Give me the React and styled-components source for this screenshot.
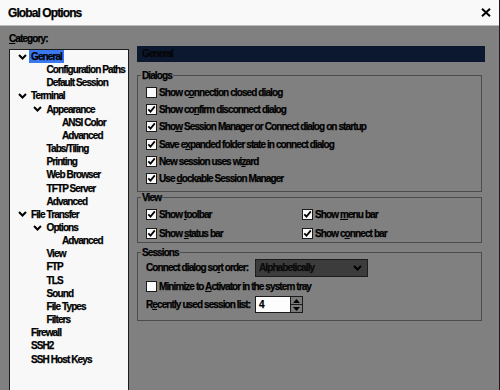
import React from 'react';
import styled, { createGlobalStyle } from 'styled-components';

const FONT = `"Liberation Sans", Arial, sans-serif`;

const GlobalStyle = createGlobalStyle`
	html, body {
		margin: 0;
		padding: 0;
		background: #808080;
	}
`;

const treeRows = [
	{ label: 'General', level: 0, open: true, selected: true },
	{ label: 'Configuration Paths', level: 1 },
	{ label: 'Default Session', level: 1 },
	{ label: 'Terminal', level: 0, open: true },
	{ label: 'Appearance', level: 1, open: true },
	{ label: 'ANSI Color', level: 2 },
	{ label: 'Advanced', level: 2 },
	{ label: 'Tabs/Tiling', level: 1 },
	{ label: 'Printing', level: 1 },
	{ label: 'Web Browser', level: 1 },
	{ label: 'TFTP Server', level: 1 },
	{ label: 'Advanced', level: 1 },
	{ label: 'File Transfer', level: 0, open: true },
	{ label: 'Options', level: 1, open: true },
	{ label: 'Advanced', level: 2 },
	{ label: 'View', level: 1 },
	{ label: 'FTP', level: 1 },
	{ label: 'TLS', level: 1 },
	{ label: 'Sound', level: 1 },
	{ label: 'File Types', level: 1 },
	{ label: 'Filters', level: 1 },
	{ label: 'Firewall', level: 0 },
	{ label: 'SSH2', level: 0 },
	{ label: 'SSH Host Keys', level: 0 },
];

function Chevron() {
	return (
		<svg width="9" height="6" viewBox="0 0 9 6">
			<path d="M1 1 L4.5 4.5 L8 1" fill="none" stroke="#000" strokeWidth="2" />
		</svg>
	);
}

function Check({ checked, children }) {
	return (
		<CheckRow>
			<Box>
				{checked && (
					<svg width="9" height="9" viewBox="0 0 9 9">
						<path d="M1.3 4.3 L3.5 6.6 L7.8 1.4" fill="none" stroke="#000" strokeWidth="1.7" />
					</svg>
				)}
			</Box>
			<Label>{children}</Label>
		</CheckRow>
	);
}

function App() {
	return (
		<>
			<GlobalStyle />
			<Window>
				<TitleBar>
					<Title>Global Options</Title>
					<svg width="10" height="9" viewBox="0 0 10 9">
						<path d="M1 0.8 L9 8.2 M9 0.8 L1 8.2" stroke="#000" strokeWidth="2" />
					</svg>
				</TitleBar>
				<Body>
					<LeftCol>
						<CategoryLabel>
							<u>C</u>ategory:
						</CategoryLabel>
						<Tree>
							{treeRows.map((row, i) => (
								<TreeRow key={i} $level={row.level}>
									<Toggle>{row.open && <Chevron />}</Toggle>
									<TreeLabel $selected={row.selected}>{row.label}</TreeLabel>
								</TreeRow>
							))}
						</Tree>
					</LeftCol>
					<RightCol>
						<Header>General</Header>
						<Group $mt={7.5} $pt={3} $pb={3.5}>
							<Legend>Dialogs</Legend>
							<Check>Show c<u>o</u>nnection closed dialog</Check>
							<Check checked>Show co<u>n</u>firm disconnect dialog</Check>
							<Check checked>Sho<u>w</u> Session Manager or Connect dialog on startup</Check>
							<Check checked>Save e<u>x</u>panded folder state in connect dialog</Check>
							<Check checked>New session uses wi<u>z</u>ard</Check>
							<Check checked>Use <u>d</u>ockable Session Manager</Check>
						</Group>
						<Group $mt={0} $pt={3.3} $pb={0.6}>
							<Legend>View</Legend>
							<ViewGrid>
								<Check checked>Show <u>t</u>oolbar</Check>
								<Check checked>Show <u>m</u>enu bar</Check>
								<Check checked>Show <u>s</u>tatus bar</Check>
								<Check checked>Show c<u>o</u>nnect bar</Check>
							</ViewGrid>
						</Group>
						<Group $mt={3.5} $pt={1.2} $pb={7}>
							<Legend>Sessions</Legend>
							<SessionGrid>
								<Label>Connect dialog so<u>r</u>t order:</Label>
								<Combo>
									<span>Alphabetically</span>
									<Chevron />
								</Combo>
								<Wide>
									<Check>Minimize to <u>A</u>ctivator in the system tray</Check>
								</Wide>
								<Label>R<u>e</u>cently used session list:</Label>
								<Spin>
									<SpinInput>4</SpinInput>
									<SpinButtons>
										<SpinButton>
											<svg width="7" height="4" viewBox="0 0 7 4">
												<path d="M0 4 L3.5 0 L7 4 Z" fill="#000" />
											</svg>
										</SpinButton>
										<SpinButton>
											<svg width="7" height="4" viewBox="0 0 7 4">
												<path d="M0 0 L3.5 4 L7 0 Z" fill="#000" />
											</svg>
										</SpinButton>
									</SpinButtons>
								</Spin>
							</SessionGrid>
						</Group>
					</RightCol>
				</Body>
			</Window>
		</>
	);
}

const Window = styled.div`
	width: 500px;
	height: 390px;
	box-sizing: border-box;
	border-right: 1px solid #1b1b1b;
	background: #808080;
	display: flex;
	flex-direction: column;
	overflow: hidden;
	font-family: ${FONT};
	font-weight: 700;
	letter-spacing: -0.9px;
	-webkit-text-stroke: 0.25px currentColor;
	color: #000;
`;

const TitleBar = styled.div`
	height: 25px;
	flex: none;
	border-bottom: 1px solid #bdbdbd;
	background: #f9f9f9;
	display: flex;
	align-items: center;
	justify-content: space-between;
	padding: 0 8px 0 8px;
`;

const Title = styled.div`
	font-size: 12px;
	line-height: 14px;
`;

const Body = styled.div`
	flex: 1;
	min-height: 0;
	display: flex;
	gap: 8px;
	padding: 6px 0 0 9px;
`;

const LeftCol = styled.div`
	width: 120px;
	flex: none;
	display: flex;
	flex-direction: column;
`;

const CategoryLabel = styled.div`
	font-size: 10px;
	line-height: 13px;
	margin-bottom: 4px;
`;

const Tree = styled.div`
	flex: 1;
	box-sizing: border-box;
	border: 1px solid #1c1c1c;
	border-bottom: none;
	background: #f8f8f8;
`;

const TreeRow = styled.div`
	height: 13.17px;
	display: flex;
	align-items: center;
	padding-left: ${p => 6 + p.$level * 15.5}px;
	font-size: 10px;
`;

const Toggle = styled.div`
	width: 13px;
	flex: none;
	display: flex;
	align-items: center;
	justify-content: center;
	padding-right: 1px;
	box-sizing: border-box;
`;

const TreeLabel = styled.span`
	line-height: 13.2px;
	padding: 0 2px;
	white-space: nowrap;
	background: ${p => (p.$selected ? '#3a78f0' : 'transparent')};
`;

const RightCol = styled.div`
	width: 348px;
	flex: none;
	padding-top: 14px;
`;

const Header = styled.div`
	height: 16px;
	line-height: 16px;
	background: #0c1830;
	color: #050505;
	font-size: 10px;
	padding-left: 5px;
`;

const Group = styled.fieldset`
	margin: ${p => p.$mt}px 3px 0 0;
	border: 1px solid #4c4c4c;
	padding: ${p => p.$pt}px 8px ${p => p.$pb}px 8px;
	min-width: 0;
`;

const Legend = styled.legend`
	font-size: 10px;
	line-height: 11px;
	padding: 0 1px;
	margin-left: -5px;
`;

const CheckRow = styled.div`
	height: 17.3px;
	display: flex;
	align-items: center;
	gap: 2px;
`;

const Box = styled.div`
	width: 11px;
	height: 11px;
	box-sizing: border-box;
	border: 1px solid #1a1a1a;
	background: #fafafa;
	flex: none;
	display: flex;
	align-items: center;
	justify-content: center;
`;

const Label = styled.span`
	font-size: 10px;
	white-space: nowrap;
`;

const ViewGrid = styled.div`
	display: grid;
	grid-template-columns: 156px auto;
	row-gap: 1px;
`;

const SessionGrid = styled.div`
	display: grid;
	grid-template-columns: 109px auto;
	grid-template-rows: 18px 17.3px 17px;
	row-gap: 1px;
	align-items: center;
`;

const Wide = styled.div`
	grid-column: 1 / -1;
`;

const Combo = styled.div`
	width: 113px;
	height: 18px;
	box-sizing: border-box;
	border: 1px solid #1c1c1c;
	background: #3c3c3c;
	color: #0a0a0a;
	font-size: 10px;
	display: flex;
	align-items: center;
	justify-content: space-between;
	padding: 0 5px 0 3px;
`;

const Spin = styled.div`
	display: flex;
	height: 17px;
`;

const SpinInput = styled.div`
	width: 35px;
	box-sizing: border-box;
	border: 1px solid #1a1a1a;
	border-right: none;
	background: #fdfdfd;
	font-size: 10px;
	line-height: 15px;
	padding-left: 3px;
`;

const SpinButtons = styled.div`
	width: 13px;
	box-sizing: border-box;
	border: 1px solid #1a1a1a;
	display: flex;
	flex-direction: column;
	background: #7a7a7a;
`;

const SpinButton = styled.div`
	flex: 1;
	display: flex;
	align-items: center;
	justify-content: center;
	& + & {
		border-top: 1px solid #1a1a1a;
	}
`;

export default App;
